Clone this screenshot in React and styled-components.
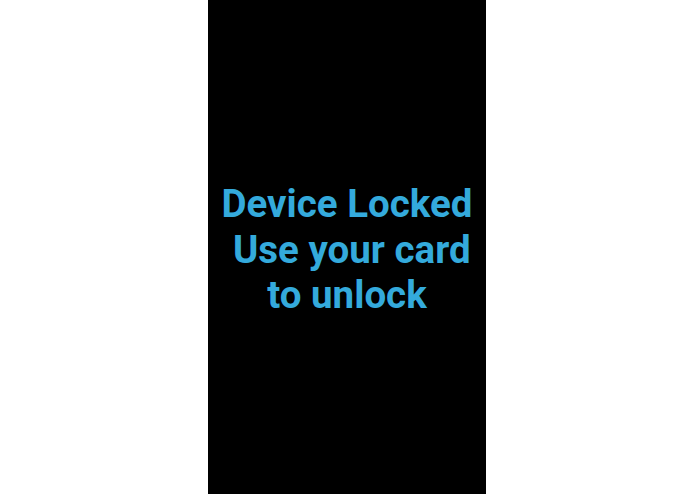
import React from "react";
import styled, { createGlobalStyle } from "styled-components";

const Global = createGlobalStyle`
  html, body { margin: 0; padding: 0; background: #ffffff; height: 100%; }
  #root { height: 100%; }
`;

const Page = styled.div`
  height: 494px;
  display: flex;
  justify-content: flex-start;
  padding-left: 208px;
  background: #ffffff;
`;

const Screen = styled.div`
  width: 278px;
  height: 100%;
  background: #000000;
  display: flex;
  align-items: center;
  justify-content: center;
`;

const Message = styled.div`
  font-family: Roboto, "Liberation Sans", sans-serif;
  font-weight: 700;
  font-size: 38.5px;
  line-height: 45.5px;
  color: #34aadc;
  text-align: center;
  white-space: pre;
  margin-top: 5px;
`;

export default function App() {
  return (
    <>
      <Global />
      <Page>
        <Screen>
          <Message>{"Device Locked\n Use your card\nto unlock"}</Message>
        </Screen>
      </Page>
    </>
  );
}
